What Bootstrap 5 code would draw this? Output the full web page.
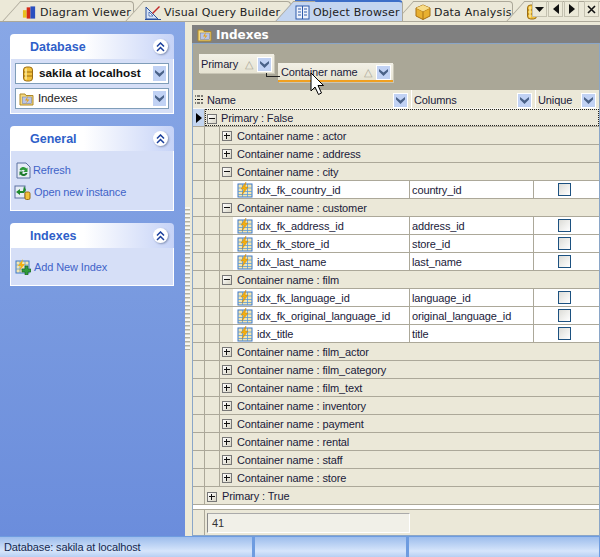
<!DOCTYPE html>
<html lang="en">
<head>
  <meta charset="UTF-8" />
  <title>Object Browser</title>
  <link href="https://cdn.jsdelivr.net/npm/bootstrap@5.3.0/dist/css/bootstrap.min.css" rel="stylesheet" />
  <style>
    html, body { height: 100%; }
    body { margin: 0; overflow: hidden; background: #ece9d8; color: #1a1a3a; font: 11px/1 "Liberation Sans", Arial, sans-serif; letter-spacing: -.12px; }
    svg { display: block; flex: none; }
    .app-shell { width: 600px; height: 557px; }

    /* tabs */
    .tab-strip { height: 22px; flex: none; position: relative; overflow: hidden; background: #ece9d8; border-bottom: 1px solid #aca899; font: 11px/1 "DejaVu Sans", sans-serif; letter-spacing: .2px; color: #222; }
    .doc-tab { position: absolute; top: 1px; height: 21px; background: #ebe8d8; border-top: 1px solid #aca899; border-right: 1px solid #aca899; border-top-right-radius: 4px; gap: 3px; white-space: nowrap; }
    .doc-tab::before { content: ""; position: absolute; top: -1px; left: -11px; width: 22px; height: 21px; background: inherit; border-left: 1px solid #aca899; border-top: 1px solid #aca899; transform: skewX(-42deg); z-index: 0; }
    .doc-tab > * { position: relative; z-index: 1; }
    .doc-tab.is-active { background: #c3d5f0; border-top: 2px solid #3c6ec8; top: 0; height: 22px; z-index: 3; }
    .tab-nav { position: absolute; top: 1px; width: 15px; height: 16px; background: #ece9d8; border: 1px solid #c4c1b0; z-index: 5; justify-content: center; }

    /* left side */
    .side-pane { width: 185px; flex: none; padding: 12px 11px 0 10px; background: linear-gradient(#88a7e6, #7a9be0 50%, #6b8ddc); }
    .task-panel { margin-bottom: 12px; }
    .task-head { height: 25px; padding-left: 20px; border-radius: 4px 4px 0 0; background: linear-gradient(90deg, #fff 45%, #c6d3f7); color: #2f5fc9; font: bold 12.5px/1 "Liberation Sans", sans-serif; letter-spacing: 0; }
    .task-head > span:first-child { padding-top: 2px; }
    .round-btn { width: 15px; height: 15px; margin-right: 6px; border-radius: 50%; background: #fff; box-shadow: 1px 1px 2px #8896b8; justify-content: center; }
    .task-body { background: #d6dff7; border: 1px solid #fff; border-top: 0; padding: 4px; }
    .combo-box { height: 21px; margin-bottom: 4px; background: #fff; border: 1px solid #7f9db9; padding: 0 1px 0 3px; gap: 4px; color: #222; font-size: 11.5px; white-space: nowrap; }
    .combo-box.is-db { font-weight: bold; font-size: 11.8px; color: #111; padding-left: 6px; gap: 5px; letter-spacing: 0; }
    .combo-box:last-child { margin-bottom: 0; }
    .chev-btn { width: 15px; height: 15px; background: #c1d2f4; outline: 1px solid #fff; outline-offset: -1px; justify-content: center; flex: none; }
    .combo-box .chev-btn { width: 15px; height: 17px; }
    .task-link { height: 22px; gap: 3px; color: #3f63c8; font-size: 11px; }
    .link-refresh { gap: 2px; padding-left: 2px; }

    .grip-bar { width: 6px; flex: none; padding-top: 185px; }
    .grip-bar i { display: block; width: 5px; height: 143px; background: repeating-linear-gradient(#f7f6ef 0 2px, #b5b2a2 2px 3px, #d8d5c5 3px 4px); }

    /* main grid */
    .main-pane { width: 408px; margin-left: 1px; flex: none; padding-top: 3px; }
    .view-title { height: 18px; flex: none; background: #808080; color: #fff; font: bold 12px/1 "DejaVu Sans", sans-serif; letter-spacing: 0; padding: 1px 0 0 5px; gap: 4px; }
    .grid-frame { flex: 1; border: 1px solid #8aa6c8; background: #ebe8d8; }
    .group-area { height: 46px; flex: none; background: #aaa797; position: relative; padding: 10px 0 0 6px; white-space: nowrap; }
    .group-chip { height: 19px; background: linear-gradient(#f2f0e6, #e6e3d2); padding: 1px 2px 0 2px; gap: 4px; box-shadow: 1px 1px 0 #c9c6b6; }
    .chip-one { width: 75px; }
    .chip-two { width: 115px; margin: 9px 0 0 4px; padding-left: 3px; border-bottom: 2px solid #f0a020; }
    .tri-mark { color: #aaa797; font-size: 11px; margin-left: auto; }
    .chip-link { position: absolute; left: 73px; top: 29px; width: 14px; height: 4px; border-left: 1px solid #222; border-bottom: 1px solid #222; }
    .mouse-cursor { position: absolute; left: 117px; top: 28px; z-index: 4; }

    .head-row { height: 19px; flex: none; border-bottom: 1px solid #f8f7f0; }
    .head-cell { height: 100%; padding: 2px 3px 0 2px; }
    .cell-mark { width: 12px; flex: none; padding-top: 2px; }
    .cell-name { width: 206px; flex: none; }
    .cell-cols { width: 124px; flex: none; border-left: 1px solid #fff; }
    .cell-uniq { flex: 1; border-left: 1px solid #fff; }

    .grid-row { height: 18px; flex: none; border-bottom: 1px solid #aca899; }
    .row-mark { width: 12px; height: 18px; flex: none; border-right: 1px solid #aca899; border-bottom: 1px solid #aca899; margin-bottom: -1px; }
    .row-mark.is-current { background: #c3d5f0; justify-content: center; padding-top: 1px; }
    .row-indent-a { width: 14px; height: 18px; flex: none; margin-bottom: -1px; }
    .row-indent-b { width: 14px; height: 18px; flex: none; border-left: 1px solid #aca899; margin-bottom: -1px; }
    .row-focus { flex: 1; height: 17px; outline: 1px dotted #222; outline-offset: -1px; gap: 4px; padding: 2px 0 0 2px; }
    .row-group { flex: 1; height: 17px; gap: 5px; padding: 2px 0 0 2px; }
    .row-group.row-nested { border-left: 1px solid #aca899; height: 18px; margin-bottom: -1px; padding-top: 0; }
    .tree-box { width: 10px; height: 10px; flex: none; border: 1px solid #777; background: linear-gradient(135deg, #fff, #d8d5c5); position: relative; }
    .tree-box::before { content: ""; position: absolute; left: 1px; right: 1px; top: 3px; height: 1px; background: #111; }
    .tree-box.is-plus::after { content: ""; position: absolute; top: 1px; bottom: 1px; left: 3px; width: 1px; background: #111; }
    .data-cell { height: 17px; background: #fff; padding: 2px 0 0 2px; border-right: 1px solid #aca899; gap: 4px; }
    .data-name { width: 177px; flex: none; padding-left: 3px; }
    .data-name svg { margin-left: 1px; margin-top: -2px; }
    .data-cols { width: 124px; flex: none; }
    .data-uniq { flex: 1; justify-content: center; border-right: 0; padding: 0 5px 0 0; }
    .fake-check { width: 13px; height: 13px; border: 1px solid #1c5180; background: linear-gradient(135deg, #dcdcd7, #fff); }

    .grid-gap { height: 5px; flex: none; background: #fff; border-bottom: 1px solid #aca899; }
    .foot-row { flex: 1; }
    .foot-mark { width: 12px; height: 100%; border-right: 1px solid #aca899; }
    .foot-value { width: 203px; height: 20px; margin-left: 2px; padding: 2px 0 0 4px; background: #f1f0e8; border: 1px solid #d4d1c0; border-left-color: #888; border-top-color: #aaa; border-right-color: #fff; border-bottom-color: #fff; color: #333; }

    .status-strip { height: 21px; flex: none; gap: 3px; background: #6e9ce0; padding: 1px 1px 0 0; color: #14284f; font-size: 11px; }
    .status-part { height: 100%; padding-left: 4px; background: linear-gradient(#9dbdec, #d6e5fb 70%, #b7cff3); }
  </style>
</head>

<body>
  <svg width="0" height="0" class="position-absolute">
    <symbol id="ic-chev" viewBox="0 0 11 9"><path d="M1 1l4.500 3.500L10 1v2.500L5.500 8 1 3.500z" fill="#4a6288"/></symbol>
    <symbol id="ic-up2" viewBox="0 0 9 10"><path d="M1 4.500L4.500 1 8 4.500M1 9L4.500 5.500 8 9" fill="none" stroke="#1b3f9c" stroke-width="1.500"/></symbol>
    <symbol id="ic-db" viewBox="0 0 12 16"><rect x="1.500" y="1" width="9" height="14" rx="3" fill="#f2c13c" stroke="#9b6c12"/><path d="M2 6h8M2 10h8" stroke="#9b6c12"/><path d="M4 2.500v11" stroke="#fdeb9f" stroke-width="1.500"/></symbol>
    <symbol id="ic-folder" viewBox="0 0 15 15"><path d="M1 3h5l1 1.500h7V14H1z" fill="#f5d97e" stroke="#b08a28"/><rect x="3.500" y="6" width="9" height="6.500" fill="#b8c4e8" stroke="#6a78a8" stroke-width=".5"/><path d="M9 5L6 9.500h2.500L6.500 13l4-4.500H8z" fill="#e8a010"/></symbol>
    <symbol id="ic-index" viewBox="0 0 16 16"><rect x="1" y="2" width="14" height="13" fill="#f4e6b0" stroke="#3c78c8"/><path d="M1 6h14M1 9.500h14M1 12.500h14M5.500 2v13M10.500 2v13" stroke="#5a9ad8" stroke-width=".8"/><path d="M9 0L4 7h3l-2 6 6-8H8z" fill="#f2b010" stroke="#c87800" stroke-width=".4"/></symbol>
    <symbol id="ic-refresh" viewBox="0 0 15 17"><path d="M1 1h9l4 4v11H1z" fill="#e6ecf6" stroke="#5c70a0"/><path d="M3.500 8a4 4 0 0 1 7-1.500l1-1V10H7.500l1.300-1.500a2 2 0 0 0-3.300 0z" fill="#2f9a3a"/><path d="M11.500 11a4 4 0 0 1-7 1.500l-1 1V9.500H7.500L6 11a2 2 0 0 0 3.500 0z" fill="#1c7a2c"/></symbol>
    <symbol id="ic-open" viewBox="0 0 17 16"><rect x="1" y="2" width="10" height="12" fill="#e6ecf6" stroke="#5c70a0"/><path d="M2 8l4-3v2h3l1-5 2 4-2 3H6v2z" fill="#1e8a2c"/><rect x="11" y="8" width="5" height="7.500" rx="1.500" fill="#f2c13c" stroke="#9b6c12"/></symbol>
    <symbol id="ic-add" viewBox="0 0 16 16"><rect x="1" y="2" width="13" height="12" fill="#f4e6b0" stroke="#3c78c8"/><path d="M1 6h13M1 10h13M5 2v12M10 2v12" stroke="#5a9ad8" stroke-width=".8"/><path d="M8 0L3 7h3L4 12l6-7H7z" fill="#f2b010"/><path d="M10 7h3v3h3v3h-3v3h-3v-3H7v-3h3z" fill="#2f9a3a" stroke="#146020" stroke-width=".6"/></symbol>
    <symbol id="ic-book" viewBox="0 0 15 15"><rect x="1" y="1" width="13" height="13" fill="#eef2fb" stroke="#2f5cab"/><path d="M7.500 1v13" stroke="#2f5cab"/><path d="M3 4h3M3 7h3M3 10h3M9 4h3M9 7h3M9 10h3" stroke="#2f5cab"/></symbol>
    <symbol id="ic-box" viewBox="0 0 16 16"><path d="M8 1l7 3v8l-7 3.500L1 12V4z" fill="#e8b030" stroke="#a87010"/><path d="M1 4l7 3.500L15 4M8 7.500v8" fill="none" stroke="#a87010"/><path d="M8 1l7 3-7 3.500L1 4z" fill="#f8dc88"/></symbol>
    <symbol id="ic-chart" viewBox="0 0 16 15"><rect x="1" y="5" width="4" height="8" fill="#e8c020"/><rect x="5" y="2" width="4" height="12" fill="#d42a18"/><rect x="9" y="1" width="5" height="13" fill="#2a50c0"/></symbol>
    <symbol id="ic-ruler" viewBox="0 0 16 15"><path d="M1 14V2l12 12z" fill="#d8e4f6" stroke="#2850a0"/><path d="M4 11V7l4 4z" fill="#fff" stroke="#2850a0" stroke-width=".7"/><path d="M7 8l7-7 1 1-7 7z" fill="#c02828"/><path d="M0 14.500h16" stroke="#2850a0"/></symbol>
  </svg>

  <div class="app-shell d-flex flex-column">
    <div class="tab-strip">
      <div class="doc-tab d-flex align-items-center" style="left:22px;width:112px"><svg width="15" height="15"><use href="#ic-chart"/></svg><span>Diagram Viewer</span></div>
      <div class="doc-tab d-flex align-items-center" style="left:145px;width:146px"><svg width="16" height="15"><use href="#ic-ruler"/></svg><span>Visual Query Builder</span></div>
      <div class="doc-tab d-flex align-items-center is-active" style="left:295px;width:108px"><svg width="15" height="15"><use href="#ic-book"/></svg><span>Object Browser</span></div>
      <div class="doc-tab d-flex align-items-center" style="left:415px;width:98px"><svg width="16" height="16"><use href="#ic-box"/></svg><span>Data Analysis</span></div>
      <div class="doc-tab d-flex align-items-center" style="left:526px;width:80px"><svg width="12" height="16"><use href="#ic-db"/></svg></div>
      <div class="tab-nav d-flex align-items-center" style="left:532px"><svg width="9" height="5"><path d="M0 0h9L4.500 5z" fill="#111"/></svg></div>
      <div class="tab-nav d-flex align-items-center" style="left:548px"><svg width="6" height="10"><path d="M6 0v10L0 5z" fill="#111"/></svg></div>
      <div class="tab-nav d-flex align-items-center" style="left:564px"><svg width="6" height="10"><path d="M0 0v10l6-5z" fill="#111"/></svg></div>
      <div class="tab-nav d-flex align-items-center" style="left:584px"><svg width="9" height="9"><path d="M1 1l7 7M8 1l-7 7" stroke="#111" stroke-width="1.600"/></svg></div>
    </div>

    <div class="d-flex flex-grow-1" style="min-height:0">
      <aside class="side-pane">
        <section class="task-panel">
          <div class="task-head d-flex align-items-center justify-content-between"><span>Database</span><span class="round-btn d-flex align-items-center"><svg width="9" height="10"><use href="#ic-up2"/></svg></span></div>
          <div class="task-body">
            <div class="combo-box is-db d-flex align-items-center"><svg width="12" height="16"><use href="#ic-db"/></svg><span class="flex-grow-1">sakila at localhost</span><span class="chev-btn d-flex align-items-center"><svg width="11" height="9"><use href="#ic-chev"/></svg></span></div>
            <div class="combo-box d-flex align-items-center"><svg width="15" height="15"><use href="#ic-folder"/></svg><span class="flex-grow-1">Indexes</span><span class="chev-btn d-flex align-items-center"><svg width="11" height="9"><use href="#ic-chev"/></svg></span></div>
          </div>
        </section>
        <section class="task-panel">
          <div class="task-head d-flex align-items-center justify-content-between"><span>General</span><span class="round-btn d-flex align-items-center"><svg width="9" height="10"><use href="#ic-up2"/></svg></span></div>
          <div class="task-body" style="padding:8px 4px 7px 3px">
            <div class="task-link link-refresh d-flex align-items-center"><svg width="15" height="17"><use href="#ic-refresh"/></svg><span>Refresh</span></div>
            <div class="task-link d-flex align-items-center"><svg width="17" height="16"><use href="#ic-open"/></svg><span>Open new instance</span></div>
          </div>
        </section>
        <section class="task-panel">
          <div class="task-head d-flex align-items-center justify-content-between"><span>Indexes</span><span class="round-btn d-flex align-items-center"><svg width="9" height="10"><use href="#ic-up2"/></svg></span></div>
          <div class="task-body" style="padding:8px 4px 7px">
            <div class="task-link d-flex align-items-center"><svg width="16" height="16"><use href="#ic-add"/></svg><span>Add New Index</span></div>
          </div>
        </section>
      </aside>

      <div class="grip-bar"><i></i></div>

      <main class="main-pane d-flex flex-column">
        <div class="view-title d-flex align-items-center"><svg width="15" height="15"><use href="#ic-folder"/></svg><span>Indexes</span></div>
        <div class="grid-frame d-flex flex-column">
          <div class="group-area d-flex align-items-start">
            <div class="group-chip chip-one d-flex align-items-center"><span>Primary</span><span class="tri-mark">△</span><span class="chev-btn d-flex align-items-center"><svg width="11" height="9"><use href="#ic-chev"/></svg></span></div>
            <div class="chip-link"></div>
            <div class="group-chip chip-two d-flex align-items-center"><span>Container name</span><span class="tri-mark">△</span><span class="chev-btn d-flex align-items-center"><svg width="11" height="9"><use href="#ic-chev"/></svg></span></div>
            <svg class="mouse-cursor" width="14" height="24" viewBox="0 0 14 24"><path d="M1 1v18l4-4 3.500 7.500 3-1.500L8 13.500h5.500z" fill="#fff" stroke="#000"/></svg>
          </div>
          <div class="head-row d-flex align-items-center">
            <div class="cell-mark d-flex justify-content-center"><svg width="8" height="10"><path d="M0 1h1M0 4.500h1M0 8h1" stroke="#111"/><path d="M2 1h6M2 4.500h6M2 8h6" stroke="#111" stroke-dasharray="3 1"/></svg></div>
            <div class="head-cell cell-name d-flex align-items-center justify-content-between"><span>Name</span><span class="chev-btn d-flex align-items-center"><svg width="11" height="9"><use href="#ic-chev"/></svg></span></div>
            <div class="head-cell cell-cols d-flex align-items-center justify-content-between"><span>Columns</span><span class="chev-btn d-flex align-items-center"><svg width="11" height="9"><use href="#ic-chev"/></svg></span></div>
            <div class="head-cell cell-uniq d-flex align-items-center justify-content-between"><span>Unique</span><span class="chev-btn d-flex align-items-center"><svg width="11" height="9"><use href="#ic-chev"/></svg></span></div>
          </div>
          <div id="grid-rows"></div>
          <div class="grid-gap"></div>
          <div class="foot-row d-flex align-items-center">
            <div class="foot-mark"></div>
            <div class="foot-value d-flex align-items-center">41</div>
          </div>
        </div>
      </main>
    </div>

    <div class="status-strip d-flex">
      <div class="status-part d-flex align-items-center" style="width:252px">Database: sakila at localhost</div>
      <div class="status-part" style="width:151px"></div>
      <div class="status-part flex-grow-1"></div>
    </div>
  </div>

  <script>
    // container name -> indexes (name, column)
    const containers = [
      ["actor"], ["address"],
      ["city", [["idx_fk_country_id", "country_id"]]],
      ["customer", [["idx_fk_address_id", "address_id"], ["idx_fk_store_id", "store_id"], ["idx_last_name", "last_name"]]],
      ["film", [["idx_fk_language_id", "language_id"], ["idx_fk_original_language_id", "original_language_id"], ["idx_title", "title"]]],
      ["film_actor"], ["film_category"], ["film_text"], ["inventory"], ["payment"], ["rental"], ["staff"], ["store"]
    ];

    let html = `<div class="grid-row d-flex align-items-center"><div class="row-mark is-current d-flex align-items-center"><svg width="6" height="10"><path d="M0 0v10l6-5z" fill="#000"/></svg></div>
      <div class="row-focus d-flex align-items-center"><span class="tree-box"></span><span>Primary : False</span></div></div>`;

    containers.forEach(([name, idx]) => {
      html += `<div class="grid-row d-flex align-items-center"><div class="row-mark"></div><div class="row-indent-a"></div>
        <div class="row-group row-nested d-flex align-items-center"><span class="tree-box ${idx ? "" : "is-plus"}"></span><span>Container name : ${name}</span></div></div>`;
      (idx || []).forEach(([iname, col]) => {
        html += `<div class="grid-row d-flex align-items-center"><div class="row-mark"></div><div class="row-indent-a"></div><div class="row-indent-b"></div>
          <div class="data-cell data-name d-flex align-items-center"><svg width="16" height="16"><use href="#ic-index"/></svg><span>${iname}</span></div>
          <div class="data-cell data-cols d-flex align-items-center">${col}</div>
          <div class="data-cell data-uniq d-flex align-items-center"><span class="fake-check"></span></div></div>`;
      });
    });

    html += `<div class="grid-row d-flex align-items-center"><div class="row-mark"></div>
      <div class="row-group d-flex align-items-center"><span class="tree-box is-plus"></span><span>Primary : True</span></div></div>`;

    document.getElementById("grid-rows").innerHTML = html;
  </script>
  <script src="https://cdn.jsdelivr.net/npm/bootstrap@5.3.0/dist/js/bootstrap.bundle.min.js"></script>
</body>
</html>
